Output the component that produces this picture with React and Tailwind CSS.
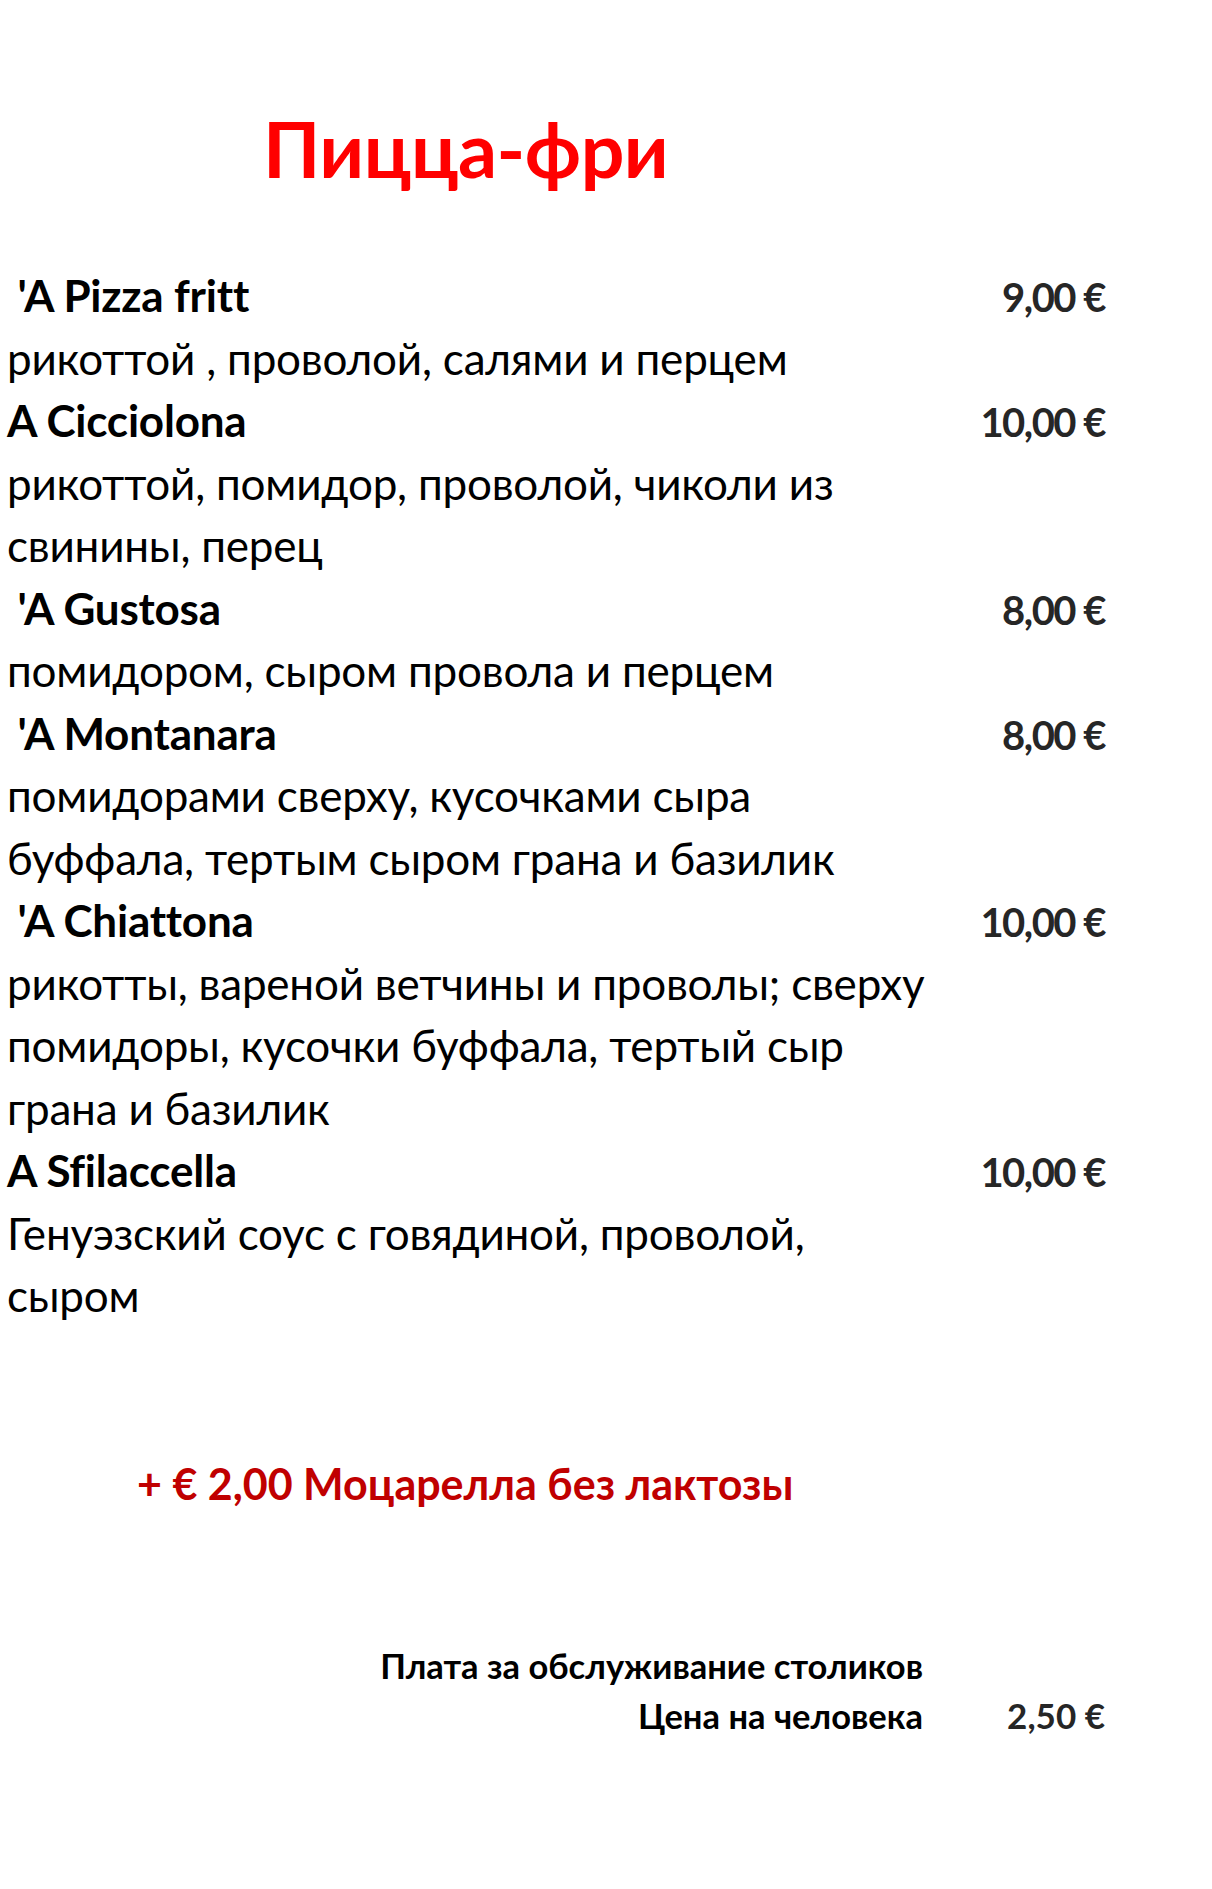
const items = [
  { name: " 'A Pizza fritt", price: "9,00 €", lines: ["рикоттой , проволой, салями и перцем"] },
  { name: "A Cicciolona", price: "10,00 €", lines: ["рикоттой, помидор, проволой, чиколи из", "свинины, перец"] },
  { name: " 'A Gustosa", price: "8,00 €", lines: ["помидором, сыром провола и перцем"] },
  { name: " 'A Montanara", price: "8,00 €", lines: ["помидорами сверху, кусочками сыра", "буффала, тертым сыром грана и базилик"] },
  {
    name: " 'A Chiattona",
    price: "10,00 €",
    lines: ["рикотты, вареной ветчины и проволы; сверху", "помидоры, кусочки буффала, тертый сыр", "грана и базилик"],
  },
  { name: "A Sfilaccella", price: "10,00 €", lines: ["Генуэзский соус с говядиной, проволой,", "сыром"] },
];

export default function App() {
  return (
    <main className="min-h-[1889px] bg-white font-['Lato',sans-serif] text-black">
      <div className="w-[1105px] pl-[7px] pt-[98px]">
        <h1 className="pl-[256px] text-[77px] font-bold leading-[100px] tracking-[-0.5px] text-[#ff0000]">Пицца-фри</h1>

        <div className="mt-[66px] text-[44px] leading-[62.5px] tracking-[-0.2px]">
          {items.map((item) => (
            <div key={item.name}>
              <div className="flex h-[62.5px] items-baseline justify-between">
                <span className="whitespace-pre font-bold">{item.name}</span>
                <span className="text-[40px] leading-none font-bold tracking-[-1.5px] text-[#262626]">{item.price}</span>
              </div>
              {item.lines.map((line) => (
                <p key={line}>{line}</p>
              ))}
            </div>
          ))}
        </div>

        <p className="mt-[126px] pl-[130px] text-[43px] font-bold leading-[62.5px] text-[#c00000]">
          + € 2,00 Моцарелла без лактозы
        </p>

        <div className="mt-[126px] text-[34.5px] font-bold leading-[50px]">
          <p className="w-[916px] text-right">Плата за обслуживание столиков</p>
          <div className="flex h-[50px] items-baseline justify-between">
            <span className="w-[916px] text-right">Цена на человека</span>
            <span className="text-[35px] leading-none text-[#262626]">2,50 €</span>
          </div>
        </div>
      </div>
    </main>
  );
}
